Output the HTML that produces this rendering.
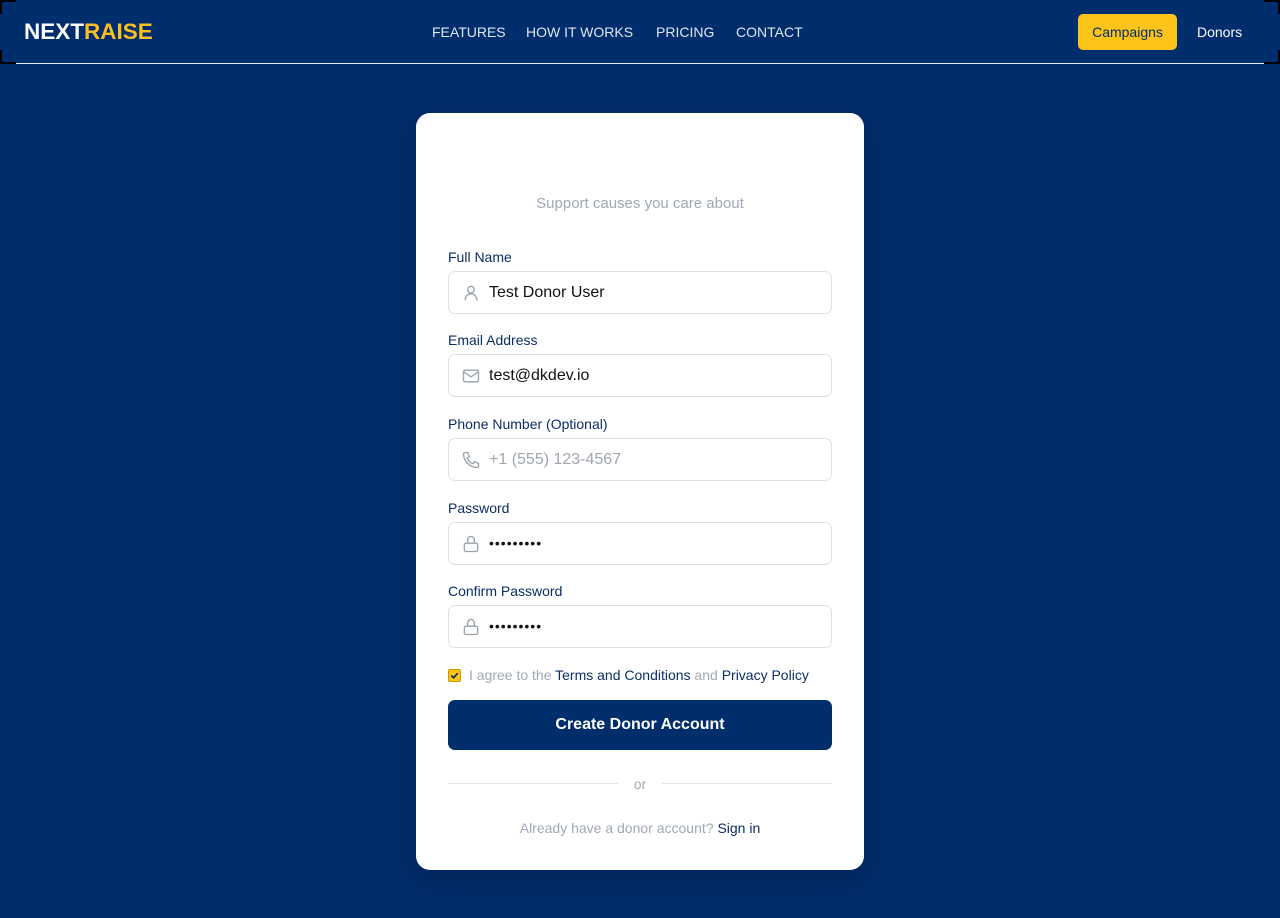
<!DOCTYPE html>
<html><head><meta charset="utf-8"><style>
*{box-sizing:border-box;margin:0;padding:0}
body{width:1280px;height:918px;background:#002d6b;font-family:"Liberation Sans",sans-serif;position:relative;overflow:hidden}
.hdr{position:absolute;left:0;top:0;width:1280px;height:64px;border-bottom:1px solid #e8ecf2}
.logo{position:absolute;left:24px;top:19px;font-size:22.5px;font-weight:bold;color:#fff;letter-spacing:0}
.logo span{color:#fbbf24}
.nav{position:absolute;top:24px;font-size:14px;color:#dfe6f0}
.btn1{position:absolute;left:1078px;top:14px;width:99px;height:36px;background:#fcc419;border-radius:5px;color:#002d6b;font-size:14px;text-align:center;line-height:36px}
.btn2{position:absolute;left:1197px;top:24px;color:#fff;font-size:14px}
.c{position:absolute;background:#000}
.card{position:absolute;left:416px;top:113px;width:448px;height:757px;background:#fff;border-radius:14px;box-shadow:0 10px 30px rgba(0,0,0,.2)}
.sub{position:absolute;top:82px;width:100%;text-align:center;color:#a0a8b4;font-size:15px}
.lab{position:absolute;left:32px;font-size:14px;color:#0b2e63}
.inp{position:absolute;left:32px;width:384px;height:43px;border:1px solid #dde1e7;border-radius:7px;font-size:16px;color:#111;padding-left:40px;line-height:41px}
.inp svg{position:absolute;left:12px;top:11px}
.ph{color:#a0a6b0}
.dots{letter-spacing:1px;font-size:14px}
.btn{position:absolute;left:32px;top:587px;width:384px;height:50px;background:#002d6b;border-radius:7px;color:#fff;text-align:center;line-height:50px;font-size:16px;font-weight:bold}
</style></head><body>
<div class="hdr">
<div class="logo">NEXT<span>RAISE</span></div>
<div class="nav" style="left:432px">FEATURES</div>
<div class="nav" style="left:526px">HOW IT WORKS</div>
<div class="nav" style="left:656px">PRICING</div>
<div class="nav" style="left:736px">CONTACT</div>
<div class="btn1">Campaigns</div>
<div class="btn2">Donors</div>
</div>
<div class="c" style="left:0;top:0;width:16px;height:2px"></div><div class="c" style="left:0;top:0;width:2px;height:14px"></div>
<div class="c" style="left:0;top:62px;width:16px;height:2px"></div><div class="c" style="left:0;top:50px;width:2px;height:14px"></div>
<div class="c" style="right:0;top:0;width:16px;height:2px"></div><div class="c" style="right:0;top:0;width:2px;height:14px"></div>
<div class="c" style="right:0;top:62px;width:16px;height:2px"></div><div class="c" style="right:0;top:50px;width:2px;height:14px"></div>
<div class="card">
<div class="sub">Support causes you care about</div>
<div class="lab" style="top:136px">Full Name</div>
<div class="inp" style="top:158px"><svg width="20" height="20" viewBox="0 0 24 24" fill="none" stroke="#9aa2ad" stroke-width="1.6"><circle cx="12" cy="8" r="4"/><path d="M5 21v-1a6 6 0 0 1 14 0v1"/></svg>Test Donor User</div>
<div class="lab" style="top:219px">Email Address</div>
<div class="inp" style="top:241px"><svg width="20" height="20" viewBox="0 0 24 24" fill="none" stroke="#9aa2ad" stroke-width="1.6"><rect x="3" y="5" width="18" height="14" rx="2"/><path d="M3 7l9 6 9-6"/></svg>test@dkdev.io</div>
<div class="lab" style="top:303px">Phone Number (Optional)</div>
<div class="inp ph" style="top:325px"><svg width="20" height="20" viewBox="0 0 24 24" fill="none" stroke="#9aa2ad" stroke-width="1.6"><path d="M5 3h3l2 5-2.5 1.5a11 11 0 0 0 7 7L16 14l5 2v3a2 2 0 0 1-2 2A17 17 0 0 1 3 5a2 2 0 0 1 2-2z"/></svg>+1 (555) 123-4567</div>
<div class="lab" style="top:387px">Password</div>
<div class="inp dots" style="top:409px"><svg width="20" height="20" viewBox="0 0 24 24" fill="none" stroke="#9aa2ad" stroke-width="1.6"><rect x="4" y="11" width="16" height="10" rx="2"/><path d="M8 11V7a4 4 0 0 1 8 0v4"/></svg>•••••••••</div>
<div class="lab" style="top:470px">Confirm Password</div>
<div class="inp dots" style="top:492px"><svg width="20" height="20" viewBox="0 0 24 24" fill="none" stroke="#9aa2ad" stroke-width="1.6"><rect x="4" y="11" width="16" height="10" rx="2"/><path d="M8 11V7a4 4 0 0 1 8 0v4"/></svg>•••••••••</div>
<div style="position:absolute;left:32px;top:556px;width:13px;height:13px;background:#fcc419;border-radius:2px;border:1px solid #c99a00"><svg width="11" height="11" viewBox="0 0 12 12" style="position:absolute;left:0;top:0"><path d="M2.5 6l2.5 2.5 4.5-5" stroke="#002d6b" stroke-width="1.8" fill="none"/></svg></div>
<div style="position:absolute;left:53px;top:554px;font-size:14px;color:#a0a8b4">I agree to the <span style="color:#0b2e63">Terms and Conditions</span> and <span style="color:#0b2e63">Privacy Policy</span></div>
<div class="btn">Create Donor Account</div>
<div style="position:absolute;left:32px;top:670px;width:170px;height:1px;background:#e5e7eb"></div>
<div style="position:absolute;left:246px;top:670px;width:170px;height:1px;background:#e5e7eb"></div>
<div style="position:absolute;left:0;width:100%;top:663px;text-align:center;font-size:14px;color:#a0a8b4">or</div>
<div style="position:absolute;left:0;width:100%;top:707px;text-align:center;font-size:14px;color:#a0a8b4">Already have a donor account? <span style="color:#0b2e63">Sign in</span></div>
</div>
</body></html>
